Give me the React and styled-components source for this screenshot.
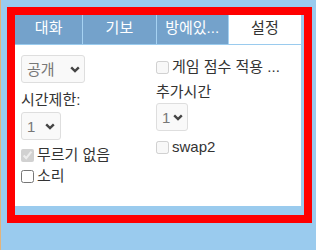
import React from 'react';
import styled, { createGlobalStyle } from 'styled-components';

const GlobalStyle = createGlobalStyle`
  html, body {
    margin: 0;
    padding: 0;
    background: #9acbee;
  }
  body {
    font-family: "Liberation Sans", "Noto Sans CJK KR", sans-serif;
    font-size: 15px;
    color: #333;
  }
`;

const Page = styled.div`
  height: 250px;
  border-left: 1px solid #e3b37a;
  padding: 7px 0 0 6px;
  box-sizing: border-box;
`;

const Frame = styled.div`
  width: 305px;
  height: 216px;
  border: 8px solid #ff0000;
  box-sizing: border-box;
`;

const Panel = styled.div`
  width: 286px;
  height: 191px;
  display: flex;
  flex-direction: column;
  background: #fff;
`;

const TabBar = styled.div`
  display: flex;
  height: 30px;
  border-bottom: 1px solid #9acbee;
  box-sizing: border-box;
`;

const Tab = styled.div`
  width: ${p => p.$w}px;
  height: 29px;
  line-height: 26px;
  text-align: center;
  white-space: nowrap;
  background: ${p => (p.$active ? '#fff' : '#74a2cb')};
  color: ${p => (p.$active ? '#333' : '#fff')};
  border-left: ${p => (p.$first ? 'none' : '1px solid #a6d2f2')};
`;

const Body = styled.div`
  flex: 1;
  display: grid;
  grid-template-columns: 135px 1fr;
  padding: 10px 0 0 6px;
`;

const Column = styled.div`
  display: flex;
  flex-direction: column;
  align-items: flex-start;
`;

const Label = styled.div`
  line-height: 20px;
  height: 20px;
  margin-top: ${p => p.$mt || 0}px;
`;

const SelectWrap = styled.div`
  position: relative;
  margin-top: ${p => p.$mt || 0}px;
`;

const Select = styled.select`
  appearance: none;
  width: ${p => p.$w}px;
  height: 28px;
  padding: 0 0 0 5px;
  border: 1px solid #dedede;
  border-radius: 3px;
  background: #f9f9f9;
  color: #777;
  font: inherit;
  font-size: 15px;
  opacity: 1;
`;

const Chevron = styled.svg`
  position: absolute;
  right: ${p => p.$r}px;
  top: 11px;
  pointer-events: none;
`;

const CheckRow = styled.label`
  display: flex;
  align-items: center;
  height: 20px;
  line-height: 20px;
  white-space: nowrap;
  margin-top: ${p => p.$mt || 0}px;

  input {
    width: 13px;
    height: 13px;
    margin: 0 3px 0 0;
  }
`;

function Dropdown({ value, width, right, mt }) {
  return (
    <SelectWrap $mt={mt}>
      <Select $w={width} disabled value={value} onChange={() => {}}>
        <option value={value}>{value}</option>
      </Select>
      <Chevron $r={right} width="10" height="7" viewBox="0 0 10 7">
        <path d="M1.2 1.3 L5 5 L8.8 1.3" fill="none" stroke="#444" strokeWidth="2.4" />
      </Chevron>
    </SelectWrap>
  );
}

export default function App() {
  return (
    <>
      <GlobalStyle />
      <Page>
        <Frame>
          <Panel>
            <TabBar>
              <Tab $w={68} $first>대화</Tab>
              <Tab $w={73}>기보</Tab>
              <Tab $w={72}>방에있...</Tab>
              <Tab $w={73} $active>설정</Tab>
            </TabBar>
            <Body>
              <Column>
                <Dropdown value="공개" width={64} right={5} />
                <Label $mt={7}>시간제한:</Label>
                <Dropdown value="1" width={40} right={6} mt={2} />
                <CheckRow $mt={5}>
                  <input type="checkbox" checked disabled readOnly />
                  무르기 없음
                </CheckRow>
                <CheckRow $mt={1}>
                  <input type="checkbox" />
                  소리
                </CheckRow>
              </Column>
              <Column>
                <CheckRow $mt={2}>
                  <input type="checkbox" disabled />
                  게임 점수 적용 ...
                </CheckRow>
                <Label $mt={5}>추가시간</Label>
                <Dropdown value="1" width={32} right={5} mt={1} />
                <CheckRow $mt={6}>
                  <input type="checkbox" disabled />
                  swap2
                </CheckRow>
              </Column>
            </Body>
          </Panel>
        </Frame>
      </Page>
    </>
  );
}
